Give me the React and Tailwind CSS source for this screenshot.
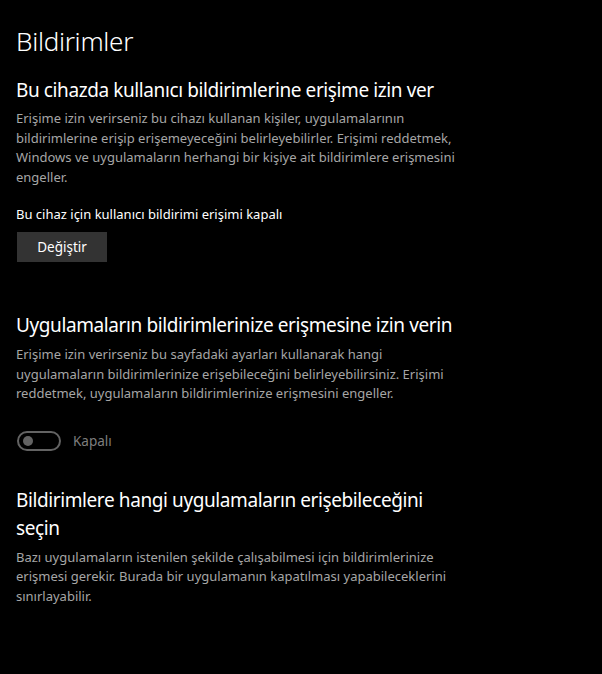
export default function App() {
    return (
        <div className="min-h-[674px] w-[602px] bg-black text-white pl-4 pt-[22px]" style={{ fontFamily: '"Segoe UI", "Noto Sans", sans-serif' }}>
            <h1 className="text-[26px] leading-[38px] font-light tracking-[-0.3px]">Bildirimler</h1>

            <div className="max-w-[452px]">
                <h2 className="mt-[16px] text-[19px] leading-[28px] tracking-[-0.4px]">Bu cihazda kullanıcı bildirimlerine erişime izin ver</h2>
                <p className="mt-[5px] text-[13px] leading-[19.5px] text-[#a6a6a6]">
                    Erişime izin verirseniz bu cihazı kullanan kişiler, uygulamalarının bildirimlerine erişip erişemeyeceğini belirleyebilirler. Erişimi reddetmek, Windows ve uygulamaların herhangi bir kişiye ait bildirimlere erişmesini engeller.
                </p>
                <p className="mt-[17px] text-[13px] leading-[20px]">Bu cihaz için kullanıcı bildirimi erişimi kapalı</p>
                <button className="mt-[8px] ml-px w-[90px] h-[30px] bg-[#333333] text-[13.5px] text-white">Değiştir</button>

                <h2 className="mt-[49px] text-[19px] leading-[28px] tracking-[-0.4px]">Uygulamaların bildirimlerinize erişmesine izin verin</h2>
                <p className="mt-[6px] text-[13px] leading-[19.5px] text-[#a6a6a6]">
                    Erişime izin verirseniz bu sayfadaki ayarları kullanarak hangi uygulamaların bildirimlerinize erişebileceğini belirleyebilirsiniz. Erişimi reddetmek, uygulamaların bildirimlerinize erişmesini engeller.
                </p>
                <div className="mt-[27px] ml-px flex items-center gap-3 h-[20px]">
                    <div className="w-[44px] h-[20px] rounded-full border-2 border-[#636363] flex items-center pl-[4px]">
                        <div className="w-[10px] h-[10px] rounded-full bg-[#636363]" />
                    </div>
                    <span className="text-[13.5px] leading-[20px] text-[#7e7e7e]">Kapalı</span>
                </div>

                <h2 className="mt-[35px] text-[19px] leading-[28px] tracking-[-0.4px]">Bildirimlere hangi uygulamaların erişebileceğini seçin</h2>
                <p className="mt-[6px] text-[13px] leading-[19.5px] text-[#a6a6a6]">
                    Bazı uygulamaların istenilen şekilde çalışabilmesi için bildirimlerinize erişmesi gerekir. Burada bir uygulamanın kapatılması yapabileceklerini sınırlayabilir.
                </p>
            </div>
        </div>
    );
}
